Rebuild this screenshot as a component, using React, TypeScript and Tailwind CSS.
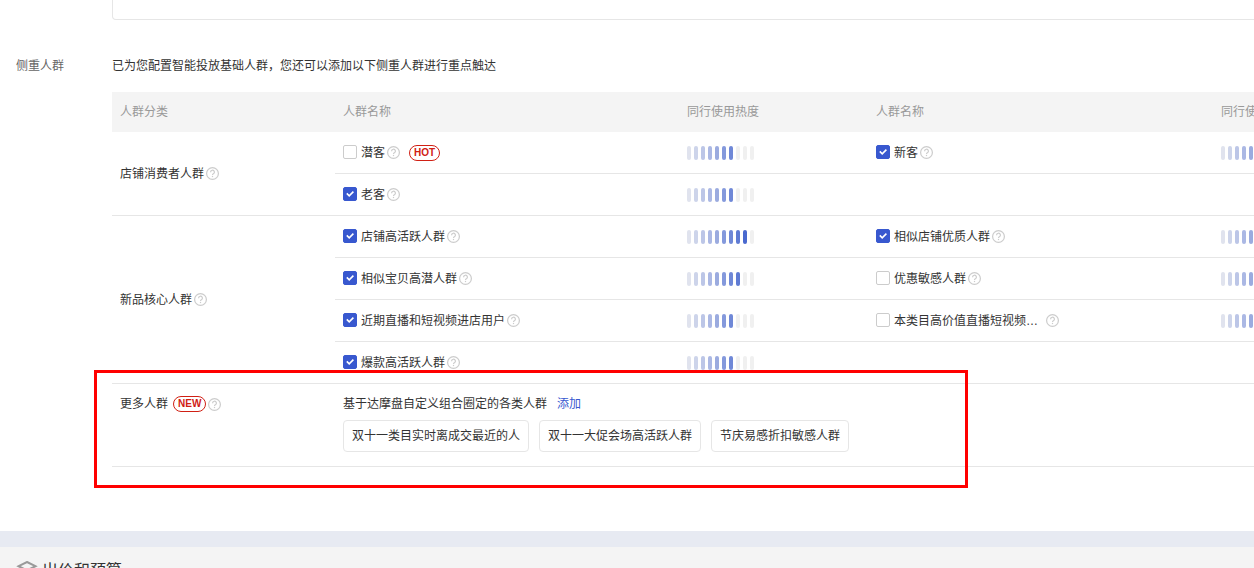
import { useId, useState } from 'react';

type Audience = {
  name: string;
  checked: boolean;
  heat: number;
  hot?: boolean;
  wide?: boolean;
};

type Group = { name: string; rows: [Audience, Audience | null][] };

const groups: Group[] = [
  {
    name: '店铺消费者人群',
    rows: [
      [
        { name: '潜客', checked: false, heat: 7, hot: true },
        { name: '新客', checked: true, heat: 7 },
      ],
      [{ name: '老客', checked: true, heat: 7 }, null],
    ],
  },
  {
    name: '新品核心人群',
    rows: [
      [
        { name: '店铺高活跃人群', checked: true, heat: 9 },
        { name: '相似店铺优质人群', checked: true, heat: 8 },
      ],
      [
        { name: '相似宝贝高潜人群', checked: true, heat: 8 },
        { name: '优惠敏感人群', checked: false, heat: 7 },
      ],
      [
        { name: '近期直播和短视频进店用户', checked: true, heat: 7 },
        { name: '本类目高价值直播短视频…', checked: false, heat: 7, wide: true },
      ],
      [{ name: '爆款高活跃人群', checked: true, heat: 7 }, null],
    ],
  },
];

const presets = ['双十一类目实时离成交最近的人', '双十一大促会场高活跃人群', '节庆易感折扣敏感人群'];

const heatColors = [
  'bg-[#e0e3ee]',
  'bg-[#cdd4ea]',
  'bg-[#bcc6e7]',
  'bg-[#abb8e4]',
  'bg-[#9babdf]',
  'bg-[#8499dc]',
  'bg-[#6f88d7]',
  'bg-[#5f7bd3]',
  'bg-[#4a69cf]',
  'bg-[#3a5bcb]',
];

function HelpIcon() {
  return (
    <svg viewBox="0 0 13 13" className="size-[13px] shrink-0" fill="none" stroke="#ccc" strokeWidth="1.2" aria-hidden="true">
      <circle cx="6.5" cy="6.5" r="5.9" />
      <path d="M4.6 5.200a1.900 1.900 0 1 1 2.800 1.600c-.6.35-.9.6-.9 1.200" />
      <path d="M6.5 8.900v1.200" />
    </svg>
  );
}

function Badge({ children }: { children: string }) {
  return (
    <span className="flex h-4 items-center rounded-full border border-[#d02014] px-1 font-['Liberation_Sans',sans-serif] text-[10px] leading-none font-bold text-[#d02014]">
      {children}
    </span>
  );
}

function HeatBars({ level }: { level: number }) {
  return (
    <div className="flex h-[14px] gap-[3px]" role="img" aria-label={`${level}/10`}>
      {heatColors.map((color, i) => (
        <span key={color} className={`w-1 shrink-0 rounded-[2px] ${i < level ? color : 'bg-[#f0f0f0]'}`} />
      ))}
    </div>
  );
}

function AudienceOption({ item }: { item: Audience }) {
  const id = useId();
  const [checked, setChecked] = useState(item.checked);
  return (
    <div className="flex items-center">
      <span className="mb-px grid size-[14px] shrink-0">
        <input
          id={id}
          type="checkbox"
          checked={checked}
          onChange={(e) => setChecked(e.target.checked)}
          className="peer col-start-1 row-start-1 size-[14px] appearance-none rounded-[2px] border border-[#ccc] bg-white checked:border-[#3858cf] checked:bg-[#3858cf]"
        />
        <svg
          viewBox="0 0 14 14"
          className="pointer-events-none invisible col-start-1 row-start-1 peer-checked:visible"
          fill="none"
          stroke="#fff"
          strokeWidth="1.6"
          aria-hidden="true"
        >
          <path d="M3.8 6.4 6.2 8.8 10.4 4.6" />
        </svg>
      </span>
      <label htmlFor={id} className="pl-1 whitespace-nowrap">
        {item.name}
      </label>
      <span className={item.wide ? 'pl-2' : 'pl-[2px]'}>
        <HelpIcon />
      </span>
      {item.hot && (
        <span className="pl-[9px]">
          <Badge>HOT</Badge>
        </span>
      )}
    </div>
  );
}

const cell = 'border-b border-[#e6e6e6] px-2';

function AudienceTable() {
  return (
    <table className="w-full table-fixed border-separate border-spacing-0 text-left">
      <colgroup>
        <col className="w-[223px]" />
        <col className="w-[344px]" />
        <col className="w-[189px]" />
        <col className="w-[345px]" />
        <col />
      </colgroup>
      <thead>
        <tr className="h-10 bg-[#f4f4f4] text-[#999]">
          <th className="px-2 font-normal">人群分类</th>
          <th className="px-2 font-normal">人群名称</th>
          <th className="px-2 font-normal">同行使用热度</th>
          <th className="px-2 font-normal">人群名称</th>
          <th className="px-2 font-normal">同行使用热度</th>
        </tr>
      </thead>
      <tbody>
        {groups.map((group) =>
          group.rows.map(([left, right], i) => (
            <tr key={left.name} className="h-[42px]">
              {i === 0 && (
                <th rowSpan={group.rows.length} className={`${cell} font-normal`}>
                  <span className="flex items-center gap-[2px]">
                    {group.name}
                    <HelpIcon />
                  </span>
                </th>
              )}
              <td className={cell}>
                <AudienceOption item={left} />
              </td>
              <td className={cell}>
                <HeatBars level={left.heat} />
              </td>
              <td className={cell}>{right && <AudienceOption item={right} />}</td>
              <td className={cell}>{right && <HeatBars level={right.heat} />}</td>
            </tr>
          )),
        )}
        <tr className="align-top">
          <th className={`${cell} pt-[10px] font-normal`}>
            <span className="flex items-center gap-[2px]">
              <span className="pr-[3px]">更多人群</span>
              <Badge>NEW</Badge>
              <HelpIcon />
            </span>
          </th>
          <td colSpan={4} className={`${cell} pt-[10px] pb-[14px]`}>
            <p className="flex gap-[10px]">
              基于达摩盘自定义组合圈定的各类人群
              <a href="#add" className="text-[#3858cf]">
                添加
              </a>
            </p>
            <div className="flex gap-[10px] pt-[6px]">
              {presets.map((name) => (
                <button key={name} type="button" className="h-8 rounded border border-[#e6e6e6] bg-white px-2">
                  {name}
                </button>
              ))}
            </div>
          </td>
        </tr>
      </tbody>
    </table>
  );
}

export default function App() {
  return (
    <div className="overflow-x-clip bg-white font-['Liberation_Sans','Noto_Sans_CJK_SC',sans-serif] text-xs leading-5 text-[#333]">
      <main className="min-w-[1418px] px-4 pb-16">
        <div className="ml-24 h-5 rounded-b border border-t-0 border-[#e6e6e6]" />
        <section className="flex pt-9">
          <h2 className="w-24 shrink-0 text-[#666]">侧重人群</h2>
          <div className="flex-1">
            <p className="pb-4">已为您配置智能投放基础人群，您还可以添加以下侧重人群进行重点触达</p>
            <div className="relative">
              <AudienceTable />
              <div className="pointer-events-none absolute -bottom-[21px] -left-[18px] h-[118px] w-[874px] border-3 border-[#f00]" />
            </div>
          </div>
        </section>
      </main>
      <div className="h-4 bg-[#e7eaf2]" />
      <section className="flex h-12 items-center gap-1 bg-[#f4f4f4] px-4">
        <svg viewBox="0 0 22 20" className="h-5 w-[22px]" fill="none" stroke="#999" strokeWidth="2" aria-hidden="true">
          <path d="M11 1 19.500 5.200 11 9.400 2.500 5.200Z" />
          <path d="M2 9.500 11 14 20 9.500" />
          <path d="M2 13.500 11 18 20 13.500" />
        </svg>
        <h2 className="text-base">出价和预算</h2>
      </section>
    </div>
  );
}
